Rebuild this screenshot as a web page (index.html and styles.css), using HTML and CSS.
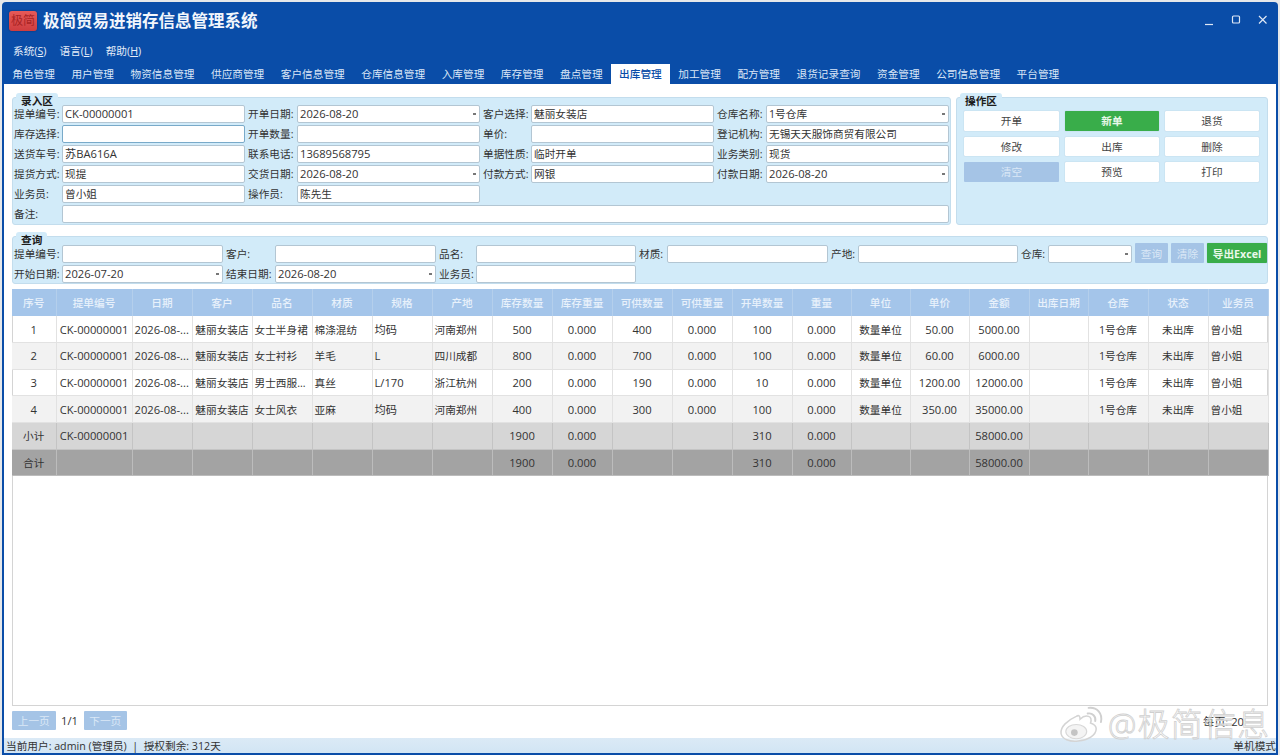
FILE: index.html
```html
<!DOCTYPE html>
<html lang="zh-CN">
<head>
<meta charset="utf-8">
<title>极简贸易进销存信息管理系统</title>
<link rel="stylesheet" href="styles.css">
</head>
<body>
<div class="window">
  <header class="titlebar">
    <div class="logo">极简</div>
    <h1 class="app-title">极简贸易进销存信息管理系统</h1>
    <div class="win-controls">
      <svg class="win-icon" viewBox="0 0 14 14"><path d="M3 11.5h8" /></svg>
      <svg class="win-icon" viewBox="0 0 14 14"><rect x="3.5" y="3" width="7" height="7" rx="1" /></svg>
      <svg class="win-icon" viewBox="0 0 14 14"><path d="M3 3l7.5 7.5M10.5 3L3 10.5" /></svg>
    </div>
  </header>
  <nav class="menubar">
    <span>系统(<u>S</u>)</span><span>语言(<u>L</u>)</span><span>帮助(<u>H</u>)</span>
  </nav>
  <nav class="tabs">
    <span class="tab">角色管理</span><span class="tab">用户管理</span><span class="tab">物资信息管理</span><span class="tab">供应商管理</span><span class="tab">客户信息管理</span><span class="tab">仓库信息管理</span><span class="tab">入库管理</span><span class="tab">库存管理</span><span class="tab">盘点管理</span><span class="tab active">出库管理</span><span class="tab">加工管理</span><span class="tab">配方管理</span><span class="tab">退货记录查询</span><span class="tab">资金管理</span><span class="tab">公司信息管理</span><span class="tab">平台管理</span>
  </nav>
  <main class="content">
    <div class="top-row">
      <section class="panel entry">
        <h2 class="legend">录入区</h2>
        <div class="entry-grid">
          <label class="first">提单编号:</label><div class="field n">CK-00000001</div>
          <label>开单日期:</label><div class="field drop n">2026-08-20</div>
          <label>客户选择:</label><div class="field">魅丽女装店</div>
          <label>仓库名称:</label><div class="field drop">1号仓库</div>

          <label class="first">库存选择:</label><div class="field focus"></div>
          <label>开单数量:</label><div class="field"></div>
          <label>单价:</label><div class="field"></div>
          <label>登记机构:</label><div class="field">无锡天天服饰商贸有限公司</div>

          <label class="first">送货车号:</label><div class="field n">苏BA616A</div>
          <label>联系电话:</label><div class="field n">13689568795</div>
          <label>单据性质:</label><div class="field">临时开单</div>
          <label>业务类别:</label><div class="field">现货</div>

          <label class="first">提货方式:</label><div class="field">现提</div>
          <label>交货日期:</label><div class="field drop n">2026-08-20</div>
          <label>付款方式:</label><div class="field">网银</div>
          <label>付款日期:</label><div class="field drop n">2026-08-20</div>

          <label class="first">业务员:</label><div class="field">曾小姐</div>
          <label>操作员:</label><div class="field">陈先生</div>
          <div class="span-4"></div>

          <label class="first">备注:</label><div class="field span-7"></div>
        </div>
      </section>
      <section class="panel actions">
        <h2 class="legend">操作区</h2>
        <div class="action-grid">
          <button class="btn">开单</button><button class="btn green">新单</button><button class="btn">退货</button>
          <button class="btn">修改</button><button class="btn">出库</button><button class="btn">删除</button>
          <button class="btn off">清空</button><button class="btn">预览</button><button class="btn">打印</button>
        </div>
      </section>
    </div>

    <section class="panel query">
      <h2 class="legend">查询</h2>
      <div class="query-grid">
        <label class="first">提单编号:</label><div class="field"></div>
        <label>客户:</label><div class="field"></div>
        <label>品名:</label><div class="field"></div>
        <label>材质:</label><div class="field"></div>
        <label>产地:</label><div class="field"></div>
        <label>仓库:</label><div class="field drop"></div>
        <div class="query-btns">
          <button class="btn off small">查询</button><button class="btn off small">清除</button><button class="btn green excel">导出Excel</button>
        </div>
        <label class="first">开始日期:</label><div class="field drop n">2026-07-20</div>
        <label>结束日期:</label><div class="field drop n">2026-08-20</div>
        <label>业务员:</label><div class="field"></div>
      </div>
    </section>

    <div class="grid-wrap">
      <table class="data">
        <colgroup>
          <col class="c44"><col class="c76"><col class="c60"><col class="c60"><col class="c60"><col class="c60"><col class="c60"><col class="c60"><col class="c60"><col class="c60"><col class="c60"><col class="c60"><col class="c60"><col class="c59"><col class="c59"><col class="c59"><col class="c60"><col class="c59"><col class="c60"><col class="c60"><col class="c60">
        </colgroup>
        <thead>
          <tr><th>序号</th><th>提单编号</th><th>日期</th><th>客户</th><th>品名</th><th>材质</th><th>规格</th><th>产地</th><th>库存数量</th><th>库存重量</th><th>可供数量</th><th>可供重量</th><th>开单数量</th><th>重量</th><th>单位</th><th>单价</th><th>金额</th><th>出库日期</th><th>仓库</th><th>状态</th><th>业务员</th></tr>
        </thead>
        <tbody>
          <tr><td>1</td><td>CK-00000001</td><td class="l">2026-08-...</td><td>魅丽女装店</td><td class="l">女士半身裙</td><td class="l">棉涤混纺</td><td class="l">均码</td><td class="l">河南郑州</td><td>500</td><td>0.000</td><td>400</td><td>0.000</td><td>100</td><td>0.000</td><td>数量单位</td><td>50.00</td><td>5000.00</td><td></td><td>1号仓库</td><td>未出库</td><td class="l">曾小姐</td></tr>
          <tr><td>2</td><td>CK-00000001</td><td class="l">2026-08-...</td><td>魅丽女装店</td><td class="l">女士衬衫</td><td class="l">羊毛</td><td class="l">L</td><td class="l">四川成都</td><td>800</td><td>0.000</td><td>700</td><td>0.000</td><td>100</td><td>0.000</td><td>数量单位</td><td>60.00</td><td>6000.00</td><td></td><td>1号仓库</td><td>未出库</td><td class="l">曾小姐</td></tr>
          <tr><td>3</td><td>CK-00000001</td><td class="l">2026-08-...</td><td>魅丽女装店</td><td class="l">男士西服...</td><td class="l">真丝</td><td class="l">L/170</td><td class="l">浙江杭州</td><td>200</td><td>0.000</td><td>190</td><td>0.000</td><td>10</td><td>0.000</td><td>数量单位</td><td>1200.00</td><td>12000.00</td><td></td><td>1号仓库</td><td>未出库</td><td class="l">曾小姐</td></tr>
          <tr><td>4</td><td>CK-00000001</td><td class="l">2026-08-...</td><td>魅丽女装店</td><td class="l">女士风衣</td><td class="l">亚麻</td><td class="l">均码</td><td class="l">河南郑州</td><td>400</td><td>0.000</td><td>300</td><td>0.000</td><td>100</td><td>0.000</td><td>数量单位</td><td>350.00</td><td>35000.00</td><td></td><td>1号仓库</td><td>未出库</td><td class="l">曾小姐</td></tr>
          <tr class="subtotal"><td>小计</td><td>CK-00000001</td><td></td><td></td><td></td><td></td><td></td><td></td><td>1900</td><td>0.000</td><td></td><td></td><td>310</td><td>0.000</td><td></td><td></td><td>58000.00</td><td></td><td></td><td></td><td></td></tr>
          <tr class="total"><td>合计</td><td></td><td></td><td></td><td></td><td></td><td></td><td></td><td>1900</td><td>0.000</td><td></td><td></td><td>310</td><td>0.000</td><td></td><td></td><td>58000.00</td><td></td><td></td><td></td><td></td></tr>
        </tbody>
      </table>
    </div>

    <div class="pager">
      <button class="btn off page">上一页</button>
      <span class="page-num">1/1</span>
      <button class="btn off page">下一页</button>
      <span class="page-size">每页: 20</span>
    </div>
  </main>
  <footer class="statusbar">
    <span>当前用户: admin (管理员) &nbsp;|&nbsp; 授权剩余: 312天</span>
    <span>单机模式</span>
  </footer>
  <div class="watermark">
    <svg class="wb-logo" viewBox="0 0 48 40">
      <path class="wb-body" d="M19 12C10 16 2 23 3 30c1 6 9 9 18 8 10-1 19-6 19-13 0-3-3-5-6-6 1-3 1-6-2-7-3-1-7 1-9 3 0-3-1-5-4-3z" />
      <ellipse class="wb-inner" cx="19" cy="28" rx="11" ry="7.5" />
      <circle class="wb-eye" cx="17" cy="29" r="3.5" />
      <path class="wb-arc" d="M31 9c5-1 9 3 8 8M32 3c9-1 15 6 13 15" />
    </svg>
    <span class="wb-text">@极简信息</span>
  </div>
</div>
</body>
</html>
```

FILE: styles.css
```css
* { box-sizing: border-box; }
html, body { margin: 0; height: 100%; }
body {
  background: #e6e8ea;
  font-family: "Open Sans", "Noto Sans CJK SC", sans-serif;
  font-size: 10.67px;
  color: #2a2a2a;
  overflow: hidden;
}
.window {
  position: relative;
  margin: 2px 2px 0;
  height: 753px;
  background: #0a4da8;
  border-radius: 4px 4px 0 0;
  padding: 0 2px 2px;
  display: flex;
  flex-direction: column;
}
.titlebar { display: flex; align-items: center; height: 38px; padding-left: 5px; }
.logo {
  width: 28px; height: 20px;
  background: linear-gradient(#e65a58, #cf3d3f);
  border-radius: 3px;
  color: #a92424;
  font-size: 12px;
  line-height: 20px;
  text-align: center;
  box-shadow: 0 0 2px rgba(0,0,0,.4);
}
.app-title { margin: -2px 0 0 6px; font-size: 16.5px; font-weight: 700; color: #f2f6fc; }
.win-controls { margin-left: auto; display: flex; gap: 13px; padding-right: 6px; margin-top: -3px; }
.win-icon { width: 14px; height: 14px; fill: none; stroke: #dfe8f5; stroke-width: 1.2; }
.menubar { display: flex; gap: 13px; height: 22px; padding: 0 0 2px 9px; align-items: center; color: #e6eef9; }
.tabs { display: flex; height: 22px; padding-left: 0; align-items: flex-end; }
.tab { color: #dbe7f7; padding: 0 8.25px; height: 20px; line-height: 21px; white-space: nowrap; }
.tab.active { background: #fff; color: #0a4da8; font-weight: 500; }

.content { flex: 1; background: #fff; display: flex; flex-direction: column; padding: 13px 8px 0; min-height: 0; }
.top-row { display: flex; gap: 5px; }
.panel {
  position: relative;
  background: #d2ebf9;
  border: 1px solid #c3dded;
  border-radius: 3px;
}
.legend {
  position: absolute;
  top: -5px; left: 3px;
  margin: 0;
  padding: 0 5px;
  height: 11px;
  line-height: 16px;
  background: #d2ebf9;
  border-radius: 3px 3px 0 0;
  font-size: 10.67px;
  font-weight: 700;
  color: #1c1c1c;
}
.entry { width: 939px; height: 128px; padding: 7px 0 0 0; }
.entry-grid {
  display: grid;
  grid-template-columns: 49px 183px 52px 183px 51px 183px 52px 183px;
  grid-auto-rows: 18px;
  row-gap: 2px;
}
label { white-space: nowrap; line-height: 18px; padding-left: 3px; color: #333; }
label.first { padding-left: 1px; }
.field {
  position: relative;
  background: #fff;
  border: 1px solid #b3c6d3;
  border-radius: 2px;
  line-height: 16px;
  padding-left: 2px;
  color: #333;
  white-space: nowrap;
  overflow: hidden;
}
.n { font-size: 11.2px; }
.field.focus { border-color: #79aac9; }
.field.drop::after {
  content: "";
  position: absolute;
  right: 3px; top: 7px;
  width: 3px; height: 2px;
  background: #777;
}
.span-4 { grid-column: span 4; }
.span-7 { grid-column: span 7; }
.actions { flex: 1; height: 128px; padding: 13px 7px 0 7px; }
.action-grid {
  display: grid;
  grid-template-columns: 95px 94px 94px;
  column-gap: 6px;
  row-gap: 6px;
  grid-auto-rows: 19.5px;
}
.btn {
  border: 0;
  padding: 0;
  border-radius: 1px;
  background: #fff;
  color: #444;
  font: inherit;
  box-shadow: 0 0 1px rgba(90,120,140,.5);
}
.btn.green { background: #39ad4a; color: #e9f8ea; font-weight: 700; }
.btn.off { background: #a5c4e6; color: #dbe8f6; box-shadow: none; }

.query { margin-top: 11px; height: 48px; padding: 8px 0 0 0; }
.query-grid {
  display: grid;
  grid-template-columns: 49px 161px 52px 161px 40px 160px 31px 161px 30px 160px 30px 84px 1fr;
  grid-auto-rows: 18px;
  row-gap: 2px;
}
.query-btns { display: flex; gap: 3px; padding-left: 3px; margin-top: -2px; height: 20px; }
.small { width: 33px; }
.query-btns .btn.excel { width: 60px; font-size: 10.67px; }

.grid-wrap { flex: none; height: 417px; margin-top: 5px; border: 1px solid #d4d4d4; border-top: 0; }
.data { table-layout: fixed; width: 1256px; margin-left: -1px; border-collapse: collapse; }
.c44 { width: 44px; } .c76 { width: 76px; } .c60 { width: 60px; } .c59 { width: 59px; }
.data th {
  height: 27px;
  background: #a4c5ea;
  color: #e8f1fb;
  font-weight: 500;
  border-right: 1px solid #b4cfec;
  padding: 0;
}
.data td {
  height: 26.67px;
  padding: 0 2px;
  text-align: center;
  white-space: nowrap;
  overflow: hidden;
  border-right: 1px solid #e2e2e2;
  border-bottom: 1px solid #e2e2e2;
  color: #333;
}
.data td:nth-child(-n+3),
.data td:nth-child(n+9):nth-child(-n+14),
.data td:nth-child(16),
.data td:nth-child(17),
.data td:nth-child(7) { font-size: 11.2px; }
.data tbody tr.subtotal td:first-child,
.data tbody tr.total td:first-child { font-size: 10.67px; }
.data td.l { text-align: left; }
.data tbody tr:nth-child(even) { background: #f2f2f2; }
.data tbody tr.subtotal { background: #d6d6d6; }
.data tbody tr.subtotal td { border-color: #c4c4c4; }
.data tbody tr.total { background: #a3a3a3; }
.data tbody tr.total td { border-color: #bcbcbc; }

.pager { display: flex; align-items: center; height: 32px; padding-bottom: 3px; }
.page { width: 43.5px; height: 19px; }
.page-num { width: 28px; text-align: center; color: #333; font-size: 11.2px; }
.page-size { margin-left: auto; padding-right: 24px; color: #333; font-size: 11.2px; }

.statusbar {
  display: flex;
  justify-content: space-between;
  align-items: center;
  height: 15px;
  padding: 0 0 0 2px;
  background: linear-gradient(#dbeaf6, #d2e5f4);
  color: #333;
}
.watermark {
  position: absolute;
  left: 1056px; top: 703px;
  display: flex;
  align-items: center;
  gap: 4px;
  pointer-events: none;
}
.wb-logo { width: 46px; height: 38px; flex: none; }
.wb-body { fill: rgba(255,255,255,.6); stroke: #d4d4d4; stroke-width: 1.6; }
.wb-inner { fill: #f4f4f4; stroke: #d8d8d8; stroke-width: 1.2; }
.wb-eye { fill: #c4c4c4; }
.wb-arc { fill: none; stroke: #d0d0d0; stroke-width: 2; stroke-linecap: round; }
.wb-text {
  font-size: 32px;
  line-height: 34px;
  letter-spacing: 1.2px;
  color: rgba(255,255,255,.45);
  -webkit-text-stroke: .8px #cfcfcf;
  font-weight: 300;
  white-space: nowrap;
}
```
